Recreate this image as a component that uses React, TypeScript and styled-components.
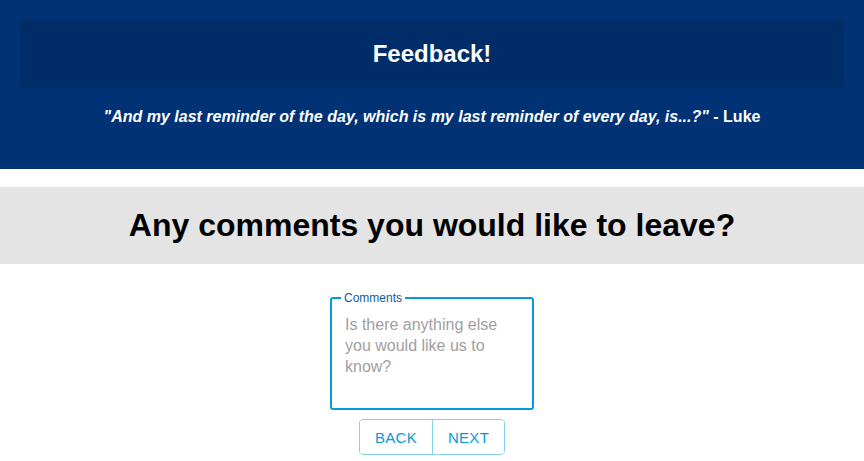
import React from "react";
import styled, { createGlobalStyle } from "styled-components";

const Global = createGlobalStyle`
  html, body { margin: 0; padding: 0; background: #ffffff; }
  body { font-family: "Liberation Sans", Arial, sans-serif; }
  * { box-sizing: border-box; }
`;

const Header = styled.header`
  background: #003275;
  height: 169px;
  padding: 20px 20px 0;
  display: flex;
  flex-direction: column;
`;

const TitleBox = styled.div`
  background: #002d67;
  height: 68px;
  display: flex;
  align-items: center;
  justify-content: center;
`;

const Title = styled.h1`
  margin: 0;
  color: #ffffff;
  font-size: 24px;
  font-weight: bold;
`;

const Quote = styled.p`
  margin: 20px 0 0;
  text-align: center;
  color: #ffffff;
  font-size: 16px;
  font-weight: bold;
`;

const QuoteText = styled.em`
  font-style: italic;
`;

const QuestionBand = styled.div`
  margin-top: 18px;
  background: #e4e4e4;
  height: 77px;
  display: flex;
  align-items: center;
  justify-content: center;
`;

const Question = styled.h2`
  margin: 0;
  font-size: 32px;
  font-weight: bold;
  color: #000000;
`;

const Form = styled.div`
  display: flex;
  flex-direction: column;
  align-items: center;
  padding-top: 27px;
`;

const Field = styled.fieldset`
  margin: 0;
  width: 204px;
  height: 119px;
  border: 2px solid #0a98d9;
  border-radius: 3px;
  padding: 0 12px 0 13px;
`;

const Legend = styled.legend`
  font-size: 12px;
  color: #0b5d9a;
  padding: 0 3px;
  margin-left: -4px;
  line-height: 14px;
`;

const Area = styled.textarea`
  display: block;
  width: 100%;
  height: 96px;
  border: none;
  outline: none;
  resize: none;
  padding: 9px 0 0;
  margin: 0;
  font-family: "Liberation Sans", Arial, sans-serif;
  font-size: 16px;
  line-height: 21px;
  color: #333;
  background: transparent;
  &::placeholder { color: #a0a0a0; }
`;

const ButtonGroup = styled.div`
  margin-top: 9px;
  display: flex;
  border: 1px solid #86d0f0;
  border-radius: 4px;
  overflow: hidden;
`;

const Button = styled.button<{ $divider?: boolean }>`
  height: 34px;
  width: 72px;
  background: #ffffff;
  border: none;
  border-left: ${(p) => (p.$divider ? "1px solid #86d0f0" : "none")};
  color: #0a98d9;
  font-family: "Liberation Sans", Arial, sans-serif;
  font-size: 15px;
  letter-spacing: 0.3px;
  padding: 0;
  cursor: pointer;
`;

export default function App() {
  return (
    <>
      <Global />
      <Header>
        <TitleBox>
          <Title>Feedback!</Title>
        </TitleBox>
        <Quote>
          <QuoteText>"And my last reminder of the day, which is my last reminder of every day, is...?"</QuoteText> - Luke
        </Quote>
      </Header>
      <QuestionBand>
        <Question>Any comments you would like to leave?</Question>
      </QuestionBand>
      <Form>
        <Field>
          <Legend>Comments</Legend>
          <Area placeholder="Is there anything else you would like us to know?" />
        </Field>
        <ButtonGroup>
          <Button>BACK</Button>
          <Button $divider>NEXT</Button>
        </ButtonGroup>
      </Form>
    </>
  );
}
